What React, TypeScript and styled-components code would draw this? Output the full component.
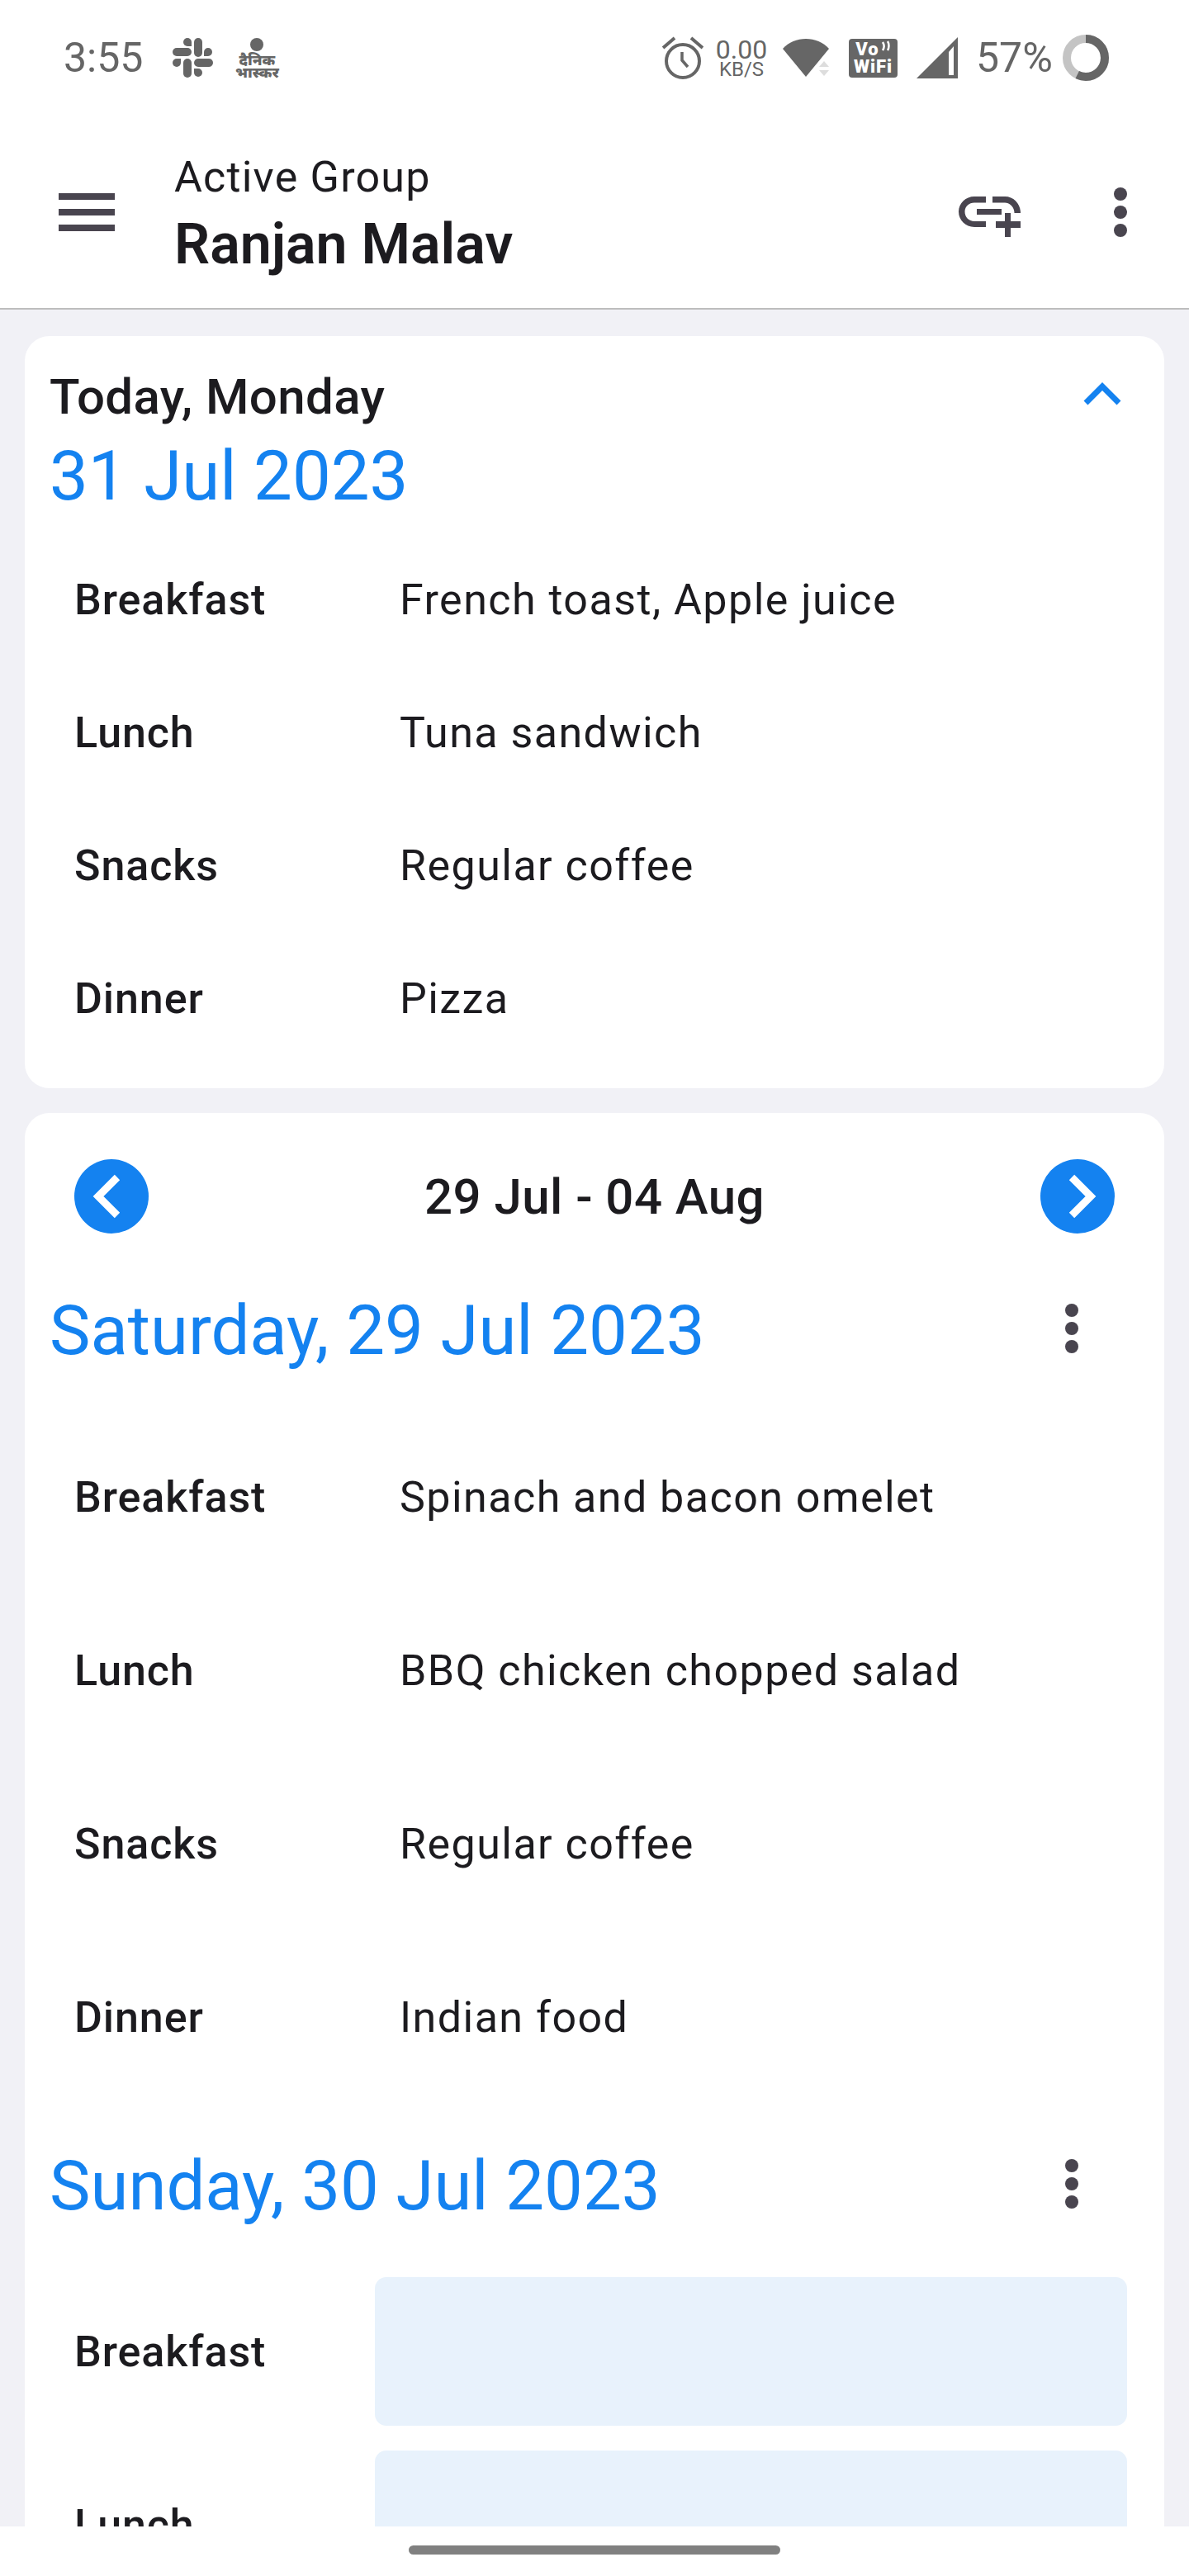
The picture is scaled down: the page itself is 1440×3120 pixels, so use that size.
import React from "react";
import styled, { createGlobalStyle } from "styled-components";

const Global = createGlobalStyle`
  html, body { margin: 0; padding: 0; background: #fff; }
  * { box-sizing: border-box; }
`

const meals = (items: string[]) => ["Breakfast", "Lunch", "Snacks", "Dinner"].map((label, i) => ({ label, value: items[i] }))

const SlackIcon = () => (
  <svg width="49" height="50" viewBox="0 0 49 50" fill="#666">
    <path d="M18 1a5 5 0 0 1 5 5v5h-5a5 5 0 0 1 0-10z" />
    <rect x="26" y="1" width="10" height="23" rx="5" />
    <rect x="0" y="13" width="23" height="10" rx="5" />
    <path d="M43 13a5 5 0 0 1 0 10h-5v-5a5 5 0 0 1 5-5z" />
    <rect x="26" y="26" width="23" height="10" rx="5" />
    <path d="M5 26h5v5a5 5 0 1 1-5-5z" />
    <rect x="13" y="26" width="10" height="23" rx="5" />
    <path d="M26 38h5a5 5 0 1 1-5 5z" />
  </svg>
)

const AlarmIcon = () => (
  <svg width="50" height="52" viewBox="0 0 50 52" fill="none" stroke="#666" strokeWidth="4">
    <circle cx="25" cy="30" r="20" />
    <path d="M24 19v10l7 8" strokeWidth="3.5" />
    <path d="M1 14L15 2M49 14L35 2" />
  </svg>
)

const WifiIcon = () => (
  <svg width="56" height="46" viewBox="0 0 56 46">
    <path d="M0 12C14-4 42-4 56 12L28 46z" fill="#666" />
    <path d="M50 27l6 7H44zM44 38h12l-6 7z" fill="#ddd" />
  </svg>
)

const VoWaves = () => (
  <svg width="12" height="14" viewBox="0 0 12 14" fill="none" stroke="#fff" strokeWidth="2.5">
    <path d="M2 2c2 3 2 7 0 10M8 1c2 3 2 8 0 11" />
  </svg>
)

const SignalIcon = () => (
  <svg width="50" height="50" viewBox="0 0 50 50">
    <path d="M50 0V50H0zM39 18V46H45V11z" fill="#666" fillRule="evenodd" />
  </svg>
)

const BatteryRing = () => (
  <svg width="56" height="56" viewBox="0 0 56 56" fill="none" strokeWidth="10">
    <circle cx="28" cy="28" r="23" stroke="#c4c4c4" />
    <circle cx="28" cy="28" r="23" stroke="#666" strokeDasharray="82.4 144.5" transform="rotate(-90 28 28)" />
  </svg>
)

const LinkAddIcon = () => (
  <svg width="76" height="49" viewBox="0 0 76 49" fill="#49454f">
    <path d="M33 0H19C8.5 0 0 8.5 0 18.5S8.5 37 19 37H33V30H19C12.5 30 7.5 25 7.5 18.5S12.5 7.5 19 7.5H33z" />
    <rect x="22" y="15" width="30" height="7" />
    <path d="M41 0H56C67 0 75 9 75 20H67.5C67.5 13 62 7.5 56 7.5H41z" />
    <rect x="45" y="30" width="30" height="8" />
    <rect x="56" y="20" width="7" height="29" />
  </svg>
)

const MoreIcon = () => (
  <svg width="16" height="60" viewBox="0 0 16 60" fill="#49454f">
    <circle cx="8" cy="8" r="8" />
    <circle cx="8" cy="30" r="8" />
    <circle cx="8" cy="52" r="8" />
  </svg>
)

const ChevronUp = () => (
  <svg width="46" height="28" viewBox="0 0 46 28" fill="none" stroke="#1482f0" strokeWidth="7">
    <path d="M3 25L23 5l20 20" />
  </svg>
)

const NavArrow = ({ dir }: { dir: "left" | "right" }) => (
  <svg width="90" height="90" viewBox="0 0 90 90">
    <circle cx="45" cy="45" r="45" fill="#1482f0" />
    <path d={dir === "left" ? "M52 22L29 45l23 23" : "M38 22l23 23-23 23"} fill="none" stroke="#fff" strokeWidth="9" />
  </svg>
)

const App: React.FC = () => (
  <Page>
    <Global />
    <StatusBar>
      <StatusGroup>
        <Clock>3:55</Clock>
        <StatusItem $ml={36}><SlackIcon /></StatusItem>
        <StatusItem $ml={28}>
          <Bhaskar>
            <BhaskarDot />
            <BhaskarText>दैनिक</BhaskarText>
            <BhaskarText>भास्कर</BhaskarText>
          </Bhaskar>
        </StatusItem>
      </StatusGroup>
      <StatusGroup>
        <AlarmIcon />
        <StatusItem $ml={13}>
          <NetSpeed>
            <NetValue>0.00</NetValue>
            <NetUnit>KB/S</NetUnit>
          </NetSpeed>
        </StatusItem>
        <StatusItem $ml={17}><WifiIcon /></StatusItem>
        <StatusItem $ml={24}>
          <VoWifi>
            <VoRow>Vo<VoWaves /></VoRow>
            <VoRow>WiFi</VoRow>
          </VoWifi>
        </StatusItem>
        <StatusItem $ml={23}><SignalIcon /></StatusItem>
        <StatusItem $ml={22}><BatteryText>57%</BatteryText></StatusItem>
        <StatusItem $ml={17}><BatteryRing /></StatusItem>
      </StatusGroup>
    </StatusBar>

    <Header>
      <Burger><span /><span /><span /></Burger>
      <TitleBlock>
        <Subtitle>Active Group</Subtitle>
        <Title>Ranjan Malav</Title>
      </TitleBlock>
      <LinkSlot><LinkAddIcon /></LinkSlot>
      <HeaderMore><MoreIcon /></HeaderMore>
    </Header>

    <Main>
      <Card>
        <TodayHead>
          <div>
            <TodayLabel>Today, Monday</TodayLabel>
            <BlueDate>31 Jul 2023</BlueDate>
          </div>
          <ChevronSlot><ChevronUp /></ChevronSlot>
        </TodayHead>
        <Meals>
          {meals(["French toast, Apple juice", "Tuna sandwich", "Regular coffee", "Pizza"]).map((m) => (
            <MealRow key={m.label} $height={161}>
              <MealLabel>{m.label}</MealLabel>
              <MealValue>{m.value}</MealValue>
            </MealRow>
          ))}
        </Meals>
      </Card>

      <WeekCard>
        <WeekNav>
          <NavArrow dir="left" />
          <WeekRange>29 Jul - 04 Aug</WeekRange>
          <NavArrow dir="right" />
        </WeekNav>

        <DayHead $height={214} $top={22}>
          <BlueDate>Saturday, 29 Jul 2023</BlueDate>
          <DayMore><MoreIcon /></DayMore>
        </DayHead>
        <Meals>
          {meals(["Spinach and bacon omelet", "BBQ chicken chopped salad", "Regular coffee", "Indian food"]).map((m) => (
            <MealRow key={m.label} $height={210}>
              <MealLabel>{m.label}</MealLabel>
              <MealValue>{m.value}</MealValue>
            </MealRow>
          ))}
        </Meals>

        <DayHead $height={210} $bottom={10}>
          <BlueDate>Sunday, 30 Jul 2023</BlueDate>
          <DayMore><MoreIcon /></DayMore>
        </DayHead>
        <EditRows>
          {["Breakfast", "Lunch"].map((label) => (
            <EditRow key={label}>
              <EditLabel>{label}</EditLabel>
              <EditBox />
            </EditRow>
          ))}
        </EditRows>
      </WeekCard>
    </Main>

    <NavBar>
      <HomeBar />
    </NavBar>
  </Page>
)

export default App

const Page = styled.div`
  width: 1440px;
  height: 3120px;
  display: flex;
  flex-direction: column;
  overflow: hidden;
  background: #fff;
  font-family: Roboto, "Noto Sans", sans-serif;
  color: #1c1b1f;
`

const StatusBar = styled.div`
  height: 140px;
  flex: none;
  display: flex;
  justify-content: space-between;
  align-items: center;
  padding: 0 97px 0 77px;
  color: #666;
`

const StatusGroup = styled.div`
  display: flex;
  align-items: center;
`

const StatusItem = styled.div<{ $ml: number }>`
  margin-left: ${(p) => p.$ml}px;
  display: flex;
`

const Clock = styled.span`
  font-size: 50px;
`

const Bhaskar = styled.div`
  width: 50px;
  display: flex;
  flex-direction: column;
  align-items: center;
`

const BhaskarDot = styled.div`
  width: 16px;
  height: 16px;
  border-radius: 50%;
  background: #666;
  margin-bottom: 3px;
`

const BhaskarText = styled.span`
  font-family: "Noto Sans", "Noto Sans Devanagari", sans-serif;
  font-size: 18px;
  line-height: 15px;
  font-weight: 900;
  white-space: nowrap;
`

const NetSpeed = styled.div`
  width: 66px;
  display: flex;
  flex-direction: column;
  align-items: center;
`

const NetValue = styled.span`
  font-size: 32px;
  line-height: 27px;
`

const NetUnit = styled.span`
  font-size: 24px;
  line-height: 20px;
`

const VoWifi = styled.div`
  width: 59px;
  height: 47px;
  background: #666;
  border-radius: 4px;
  color: #fff;
  font-weight: 900;
  font-size: 22px;
  line-height: 21px;
  letter-spacing: 1px;
  padding-top: 2px;
`

const VoRow = styled.div`
  white-space: nowrap;
  display: flex;
  justify-content: center;
  gap: 2px;
`

const BatteryText = styled.span`
  font-size: 50px;
  width: 88px;
`

const Header = styled.div`
  height: 235px;
  flex: none;
  display: flex;
  align-items: center;
  padding: 0 75px 0 71px;
  border-bottom: 2px solid #bdbdbd;
`

const Burger = styled.div`
  width: 68px;
  height: 46px;
  margin-right: 72px;
  display: flex;
  flex-direction: column;
  justify-content: space-between;
  span {
    height: 8px;
    background: #49454f;
  }
`

const TitleBlock = styled.div`
  flex: 1;
  padding-top: 4px;
`

const Subtitle = styled.div`
  font-size: 52px;
  line-height: 66px;
  letter-spacing: 1.2px;
  margin-bottom: 8px;
`

const Title = styled.div`
  font-size: 68px;
  line-height: 80px;
  font-weight: 600;
`

const LinkSlot = styled.div`
  display: flex;
  margin-top: 12px;
`

const HeaderMore = styled.div`
  margin-left: 112px;
  display: flex;
`

const Main = styled.div`
  flex: 1;
  min-height: 0;
  overflow: hidden;
  background: #f1f1f6;
  padding: 32px 30px 0;
  display: flex;
  flex-direction: column;
  gap: 30px;
`

const Card = styled.section`
  flex: none;
  background: #fff;
  border-radius: 30px;
  padding: 41px 30px 28px;
`

const WeekCard = styled(Card)`
  padding-top: 56px;
`

const TodayHead = styled.div`
  display: flex;
  justify-content: space-between;
  align-items: flex-start;
  margin-bottom: 14px;
`

const TodayLabel = styled.div`
  font-size: 60px;
  line-height: 66px;
  font-weight: 500;
  letter-spacing: 0.4px;
  margin-bottom: 8px;
`

const BlueDate = styled.div`
  font-size: 83.3px;
  line-height: 110px;
  color: #1482f0;
`

const ChevronSlot = styled.div`
  padding: 15px 22px 0 0;
  display: flex;
`

const Meals = styled.div`
  display: flex;
  flex-direction: column;
`

const MealRow = styled.div<{ $height: number }>`
  height: ${(p) => p.$height}px;
  display: flex;
  align-items: center;
  padding-left: 30px;
`

const MealLabel = styled.div`
  width: 394px;
  flex: none;
  font-size: 52px;
  font-weight: 500;
  letter-spacing: 0.9px;
`

const MealValue = styled.div`
  font-size: 52px;
  letter-spacing: 1.45px;
`

const WeekNav = styled.div`
  display: flex;
  justify-content: space-between;
  align-items: center;
  padding: 0 30px;
`

const WeekRange = styled.div`
  font-size: 60px;
  font-weight: 500;
  letter-spacing: 0.45px;
`

const DayHead = styled.div<{ $height: number; $top?: number; $bottom?: number }>`
  height: ${(p) => p.$height}px;
  padding: ${(p) => p.$top || 0}px 74px ${(p) => p.$bottom || 0}px 0;
  display: flex;
  justify-content: space-between;
  align-items: center;
`

const DayMore = styled.div`
  display: flex;
  margin-bottom: 6px;
`

const EditRows = styled.div`
  display: flex;
  flex-direction: column;
  gap: 30px;
`

const EditRow = styled.div`
  display: flex;
  align-items: center;
  padding: 0 15px 0 30px;
`

const EditLabel = styled(MealLabel)`
  width: 364px;
`

const EditBox = styled.div`
  flex: 1;
  height: 180px;
  background: #e8f2fc;
  border-radius: 14px;
`

const NavBar = styled.div`
  height: 60px;
  flex: none;
  background: #fff;
  display: flex;
  justify-content: center;
  padding-top: 23px;
`

const HomeBar = styled.div`
  width: 450px;
  height: 11px;
  border-radius: 6px;
  background: #808080;
`
